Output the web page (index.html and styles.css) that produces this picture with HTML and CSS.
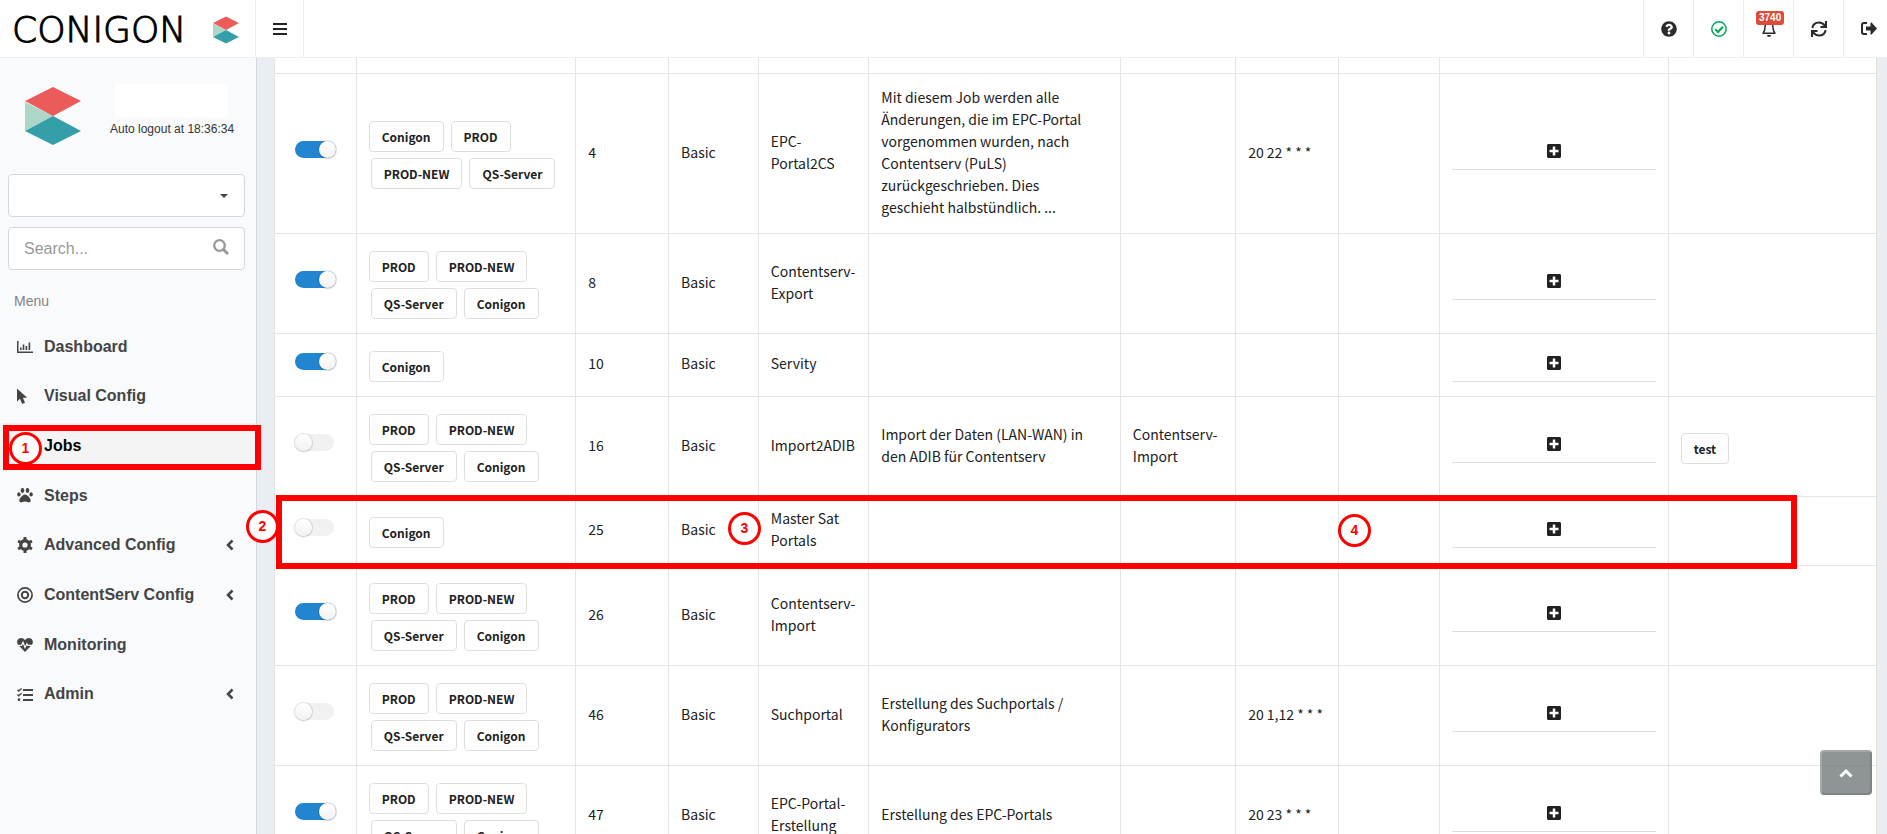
FILE: index.html
```html
<!DOCTYPE html>
<html lang="de">
<head>
<meta charset="utf-8">
<meta name="viewport" content="width=device-width, initial-scale=1">
<title>Conigon – Jobs</title>
<link rel="stylesheet" href="styles.css">
</head>
<body>
<svg class="defs" aria-hidden="true">
  <symbol id="cube" viewBox="0 0 56 58">
    <path fill="#abd6c8" d="M0 15 L28 29 L0 44 Z"/>
    <path fill="#eb5b5a" d="M28 0 L56 14 L28 29 L0 14 Z"/>
    <path fill="#359fa9" d="M28 29 L56 44 L28 58 L0 44 Z"/>
  </symbol>
  <symbol id="plus" viewBox="0 0 448 512">
    <path fill="currentColor" d="M400 32H48C21.500 32 0 53.500 0 80v352c0 26.500 21.500 48 48 48h352c26.500 0 48-21.500 48-48V80c0-26.500-21.500-48-48-48zm-32 252c0 6.600-5.400 12-12 12h-92v92c0 6.600-5.400 12-12 12h-56c-6.600 0-12-5.400-12-12v-92H92c-6.600 0-12-5.400-12-12v-56c0-6.600 5.400-12 12-12h92v-92c0-6.600 5.400-12 12-12h56c6.600 0 12 5.400 12 12v92h92c6.600 0 12 5.400 12 12v56z"/>
  </symbol>
  <symbol id="angle" viewBox="0 0 8 12">
    <path fill="none" stroke="currentColor" stroke-width="2.500" d="M6.500 1.500 L2 6 L6.500 10.500"/>
  </symbol>
</svg>

<header class="topbar">
  <a class="brand" href="#"><span class="brand-name">CONIGON</span><svg class="brand-cube"><use href="#cube"/></svg></a>
  <button class="top-item burger" aria-label="Menu">
    <svg width="14" height="12" viewBox="0 0 14 12"><path fill="#222" d="M0 0h14v2H0zM0 5h14v2H0zM0 10h14v2H0z"/></svg>
  </button>
  <nav class="top-actions">
    <button class="top-item" aria-label="Help">
      <svg width="16" height="16" viewBox="0 0 512 512"><path fill="currentColor" d="M504 256c0 137-111 248-248 248S8 393 8 256C8 119.100 119 8 256 8s248 111.100 248 248zM262.700 90c-54.500 0-89.300 23-116.500 63.800-3.500 5.300-2.400 12.400 2.700 16.300l34.700 26.300c5.200 3.900 12.600 3 16.700-2.100 17.900-22.700 30.100-35.800 57.300-35.800 20.400 0 45.700 13.100 45.700 33 0 15-12.400 22.700-32.500 34C247.100 238.500 216 254.900 216 296v4c0 6.600 5.400 12 12 12h56c6.600 0 12-5.400 12-12v-1.300c0-28.500 83.200-29.700 83.200-106.700 0-58-60.200-102-116.500-102zM256 338c-25.400 0-46 20.600-46 46s20.600 46 46 46 46-20.600 46-46-20.600-46-46-46z"/></svg>
    </button>
    <button class="top-item ok" aria-label="Status">
      <svg width="16" height="16" viewBox="0 0 16 16" fill="none" stroke="currentColor"><circle cx="8" cy="8" r="7.200" stroke-width="1.500"/><path stroke-width="2" d="M4.200 8.300 L7 11 L11.900 5.800"/></svg>
    </button>
    <button class="top-item bell" aria-label="Notifications">
      <svg width="14" height="16" viewBox="0 0 14 16"><path fill="none" stroke="currentColor" stroke-width="1.500" stroke-linejoin="round" d="M7 1.500 C4 1.500 3 4 3 6.500 C3 9.500 2 10.800 1 12.200 H13 C12 10.800 11 9.500 11 6.500 C11 4 10 1.500 7 1.500 Z"/><path fill="currentColor" d="M5 14h4a2 2 0 0 1-4 0z"/></svg>
      <span class="badge">3740</span>
    </button>
    <button class="top-item" aria-label="Refresh">
      <svg width="16" height="16" viewBox="0 0 16 16" fill="none" stroke="currentColor" stroke-width="2"><path d="M1.300 7 C2 3.500 4.800 1.500 8 1.500 C10.500 1.500 12.500 2.700 14 4.800"/><path d="M15 0 V6 H9.500"/><path d="M14.700 9 C14 12.500 11.200 14.500 8 14.500 C5.500 14.500 3.500 13.300 2 11.200"/><path d="M1 16 V10 H6.500"/></svg>
    </button>
    <button class="top-item last" aria-label="Sign out">
      <svg width="16" height="13" viewBox="0 0 16 13"><path fill="none" stroke="currentColor" stroke-width="2" d="M6 1 H3 C1.500 1 1 1.700 1 3 V10 C1 11.300 1.500 12 3 12 H6"/><path fill="currentColor" d="M5 4.500 H9.500 V1 C9.500 .4 10.100 .2 10.600 .6 L16 6.500 L10.600 12.400 C10.100 12.800 9.500 12.600 9.500 12 V8.500 H5 Z"/></svg>
    </button>
  </nav>
</header>

<div class="shell">
  <aside class="sidebar">
    <div class="user">
      <svg class="user-cube"><use href="#cube"/></svg>
      <div class="user-info"><div class="user-name"></div><div>Auto logout at 18:36:34</div></div>
    </div>
    <div class="field">
      <select class="box" aria-label="Client"><option></option></select>
      <svg class="field-icon" width="8" height="4" viewBox="0 0 8 4"><path fill="#444" d="M0 0h8L4 4z"/></svg>
    </div>
    <div class="field">
      <input class="box" type="text" placeholder="Search..." aria-label="Search">
      <svg class="field-icon glass" width="16" height="16" viewBox="0 0 16 16" fill="none" stroke="#999"><circle cx="6.500" cy="6.500" r="5.300" stroke-width="2.300"/><path stroke-width="3" d="M10.500 10.500 L15 15"/></svg>
    </div>
    <h2 class="menu-title">Menu</h2>
    <nav class="menu">
      <a href="#"><svg width="16" height="12" viewBox="0 0 16 12" fill="currentColor"><path d="M0 0h1.500v10.500H16V12H0z"/><path d="M3 6.500h1.600V9H3zM5.700 3.500h1.600V9H5.700zM8.600 5h1.600v4H8.600zM11.600 1.500h1.600V9h-1.600z"/></svg><span>Dashboard</span></a>
      <a href="#"><svg width="16" height="16" viewBox="0 0 16 16" fill="currentColor"><path d="M0 .5 V13.500 L3 10.700 L5.200 16 L8 14.800 L5.900 9.800 H10.200 Z"/></svg><span>Visual Config</span></a>
      <a href="#" class="active"><svg width="16" height="16"></svg><span>Jobs</span></a>
      <a href="#"><svg width="16" height="15" viewBox="0 0 16 15" fill="currentColor"><ellipse cx="1.900" cy="6.400" rx="1.700" ry="2.100"/><ellipse cx="5.500" cy="2.500" rx="1.800" ry="2.400"/><ellipse cx="10.500" cy="2.500" rx="1.800" ry="2.400"/><ellipse cx="14.100" cy="6.400" rx="1.700" ry="2.100"/><path d="M8 6.500 C5.500 6.500 2.300 10.500 2.300 12.600 C2.300 14.300 3.600 14.600 4.800 14.300 C6 14 7 13.600 8 13.600 C9 13.600 10 14 11.200 14.300 C12.400 14.600 13.700 14.300 13.700 12.600 C13.700 10.500 10.500 6.500 8 6.500Z"/></svg><span>Steps</span></a>
      <a href="#"><svg width="16" height="16" viewBox="0 0 16 16"><g fill="currentColor"><path d="M6.500 0h3v16h-3z"/><path d="M6.500 0h3v16h-3z" transform="rotate(60 8 8)"/><path d="M6.500 0h3v16h-3z" transform="rotate(120 8 8)"/></g><circle cx="8" cy="8" r="4.200" fill="none" stroke="currentColor" stroke-width="3.400"/><circle cx="8" cy="8" r="2.600" fill="#f9fafc"/></svg><span>Advanced Config</span><svg class="arrow"><use href="#angle"/></svg></a>
      <a href="#"><svg width="16" height="16" viewBox="0 0 16 16" fill="none" stroke="currentColor"><circle cx="8" cy="8" r="7.100" stroke-width="1.700"/><circle cx="8" cy="8" r="3.200" stroke-width="2"/></svg><span>ContentServ Config</span><svg class="arrow"><use href="#angle"/></svg></a>
      <a href="#"><svg width="16" height="14" viewBox="0 0 16 14"><path fill="currentColor" d="M8 14 L1.200 7 C-.5 5 0 2 1.800 .8 C4 -.6 6.500 .1 8 2.200 C9.500 .1 12 -.6 14.200 .8 C16 2 16.500 5 14.800 7 Z"/><path fill="none" stroke="#f9fafc" stroke-width="1.200" d="M1 7.300 H4.500 L6 4.200 L8 9.500 L9.900 5.800 L10.800 7.300 H15"/></svg><span>Monitoring</span></a>
      <a href="#"><svg width="16" height="13" viewBox="0 0 16 13"><path fill="currentColor" d="M6 1h10v2H6zM6 6h10v2H6zM6 11h10v2H6z"/><circle cx="2" cy="11.700" r="1.400" fill="currentColor"/><path fill="none" stroke="currentColor" stroke-width="1.300" d="M.4 1.800 L1.700 3 L4.600 .4 M.4 6.600 L1.700 7.800 L4.600 5.200"/></svg><span>Admin</span><svg class="arrow"><use href="#angle"/></svg></a>
    </nav>
  </aside>

  <main class="content">
    <table class="jobs">
      <colgroup><col class="c-on"><col class="c-tags"><col class="c-id"><col class="c-type"><col class="c-name"><col class="c-desc"><col class="c-next"><col class="c-cron"><col class="c-last"><col class="c-add"><col class="c-label"></colgroup>
      <tbody>
        <tr class="cut"><td></td><td></td><td></td><td></td><td></td><td></td><td></td><td></td><td></td><td></td><td></td></tr>
        <tr class="tall">
          <td><input class="toggle" type="checkbox" aria-label="Job 4" checked></td>
          <td><div class="tags"><span class="tag">Conigon</span><span class="tag">PROD</span><span class="tag">PROD-NEW</span><span class="tag">QS-Server</span></div></td>
          <td>4</td><td>Basic</td><td>EPC-Portal2CS</td>
          <td class="desc">Mit diesem Job werden alle Änderungen, die im EPC-Portal vorgenommen wurden, nach Contentserv (PuLS) zurückgeschrieben. Dies geschieht halbstündlich. ...</td>
          <td></td><td>20 22 * * *</td><td></td>
          <td><button class="add" aria-label="Add"><svg><use href="#plus"/></svg></button></td><td></td>
        </tr>
        <tr>
          <td><input class="toggle" type="checkbox" aria-label="Job 8" checked></td>
          <td><div class="tags"><span class="tag">PROD</span><span class="tag">PROD-NEW</span><span class="tag">QS-Server</span><span class="tag">Conigon</span></div></td>
          <td>8</td><td>Basic</td><td>Contentserv-Export</td><td></td><td></td><td></td><td></td>
          <td><button class="add" aria-label="Add"><svg><use href="#plus"/></svg></button></td><td></td>
        </tr>
        <tr>
          <td><input class="toggle" type="checkbox" aria-label="Job 10" checked></td>
          <td><div class="tags"><span class="tag">Conigon</span></div></td>
          <td>10</td><td>Basic</td><td>Servity</td><td></td><td></td><td></td><td></td>
          <td><button class="add" aria-label="Add"><svg><use href="#plus"/></svg></button></td><td></td>
        </tr>
        <tr>
          <td><input class="toggle" type="checkbox" aria-label="Job 16"></td>
          <td><div class="tags"><span class="tag">PROD</span><span class="tag">PROD-NEW</span><span class="tag">QS-Server</span><span class="tag">Conigon</span></div></td>
          <td>16</td><td>Basic</td><td>Import2ADIB</td><td class="desc">Import der Daten (LAN-WAN) in den ADIB für Contentserv</td><td>Contentserv-Import</td><td></td><td></td>
          <td><button class="add" aria-label="Add"><svg><use href="#plus"/></svg></button></td><td><div class="tags"><span class="tag">test</span></div></td>
        </tr>
        <tr>
          <td><input class="toggle" type="checkbox" aria-label="Job 25"></td>
          <td><div class="tags"><span class="tag">Conigon</span></div></td>
          <td>25</td><td>Basic</td><td>Master Sat Portals</td><td></td><td></td><td></td><td></td>
          <td><button class="add" aria-label="Add"><svg><use href="#plus"/></svg></button></td><td></td>
        </tr>
        <tr>
          <td><input class="toggle" type="checkbox" aria-label="Job 26" checked></td>
          <td><div class="tags"><span class="tag">PROD</span><span class="tag">PROD-NEW</span><span class="tag">QS-Server</span><span class="tag">Conigon</span></div></td>
          <td>26</td><td>Basic</td><td>Contentserv-Import</td><td></td><td></td><td></td><td></td>
          <td><button class="add" aria-label="Add"><svg><use href="#plus"/></svg></button></td><td></td>
        </tr>
        <tr>
          <td><input class="toggle" type="checkbox" aria-label="Job 46"></td>
          <td><div class="tags"><span class="tag">PROD</span><span class="tag">PROD-NEW</span><span class="tag">QS-Server</span><span class="tag">Conigon</span></div></td>
          <td>46</td><td>Basic</td><td>Suchportal</td><td class="desc">Erstellung des Suchportals / Konfigurators</td><td></td><td>20 1,12 * * *</td><td></td>
          <td><button class="add" aria-label="Add"><svg><use href="#plus"/></svg></button></td><td></td>
        </tr>
        <tr>
          <td><input class="toggle" type="checkbox" aria-label="Job 47" checked></td>
          <td><div class="tags"><span class="tag">PROD</span><span class="tag">PROD-NEW</span><span class="tag">QS-Server</span><span class="tag">Conigon</span></div></td>
          <td>47</td><td>Basic</td><td>EPC-Portal-Erstellung</td><td class="desc">Erstellung des EPC-Portals</td><td></td><td>20 23 * * *</td><td></td>
          <td><button class="add" aria-label="Add"><svg><use href="#plus"/></svg></button></td><td></td>
        </tr>
      </tbody>
    </table>
  </main>
</div>

<button class="to-top" aria-label="Back to top"><svg width="14" height="10" viewBox="0 0 14 10"><path fill="none" stroke="#fff" stroke-width="3" d="M1.500 8.500 L7 3 L12.500 8.500"/></svg></button>

<div class="mark mark-menu"></div>
<div class="mark mark-row"></div>
<span class="step step-1">1</span>
<span class="step step-2">2</span>
<span class="step step-3">3</span>
<span class="step step-4">4</span>
</body>
</html>
```

FILE: styles.css
```css
* { box-sizing: border-box; }

body {
  margin: 0;
  height: 100vh;
  overflow: hidden;
  display: flex;
  flex-direction: column;
  position: relative;
  background: #eaeef3;
  color: #212121;
  font-family: "Liberation Sans", Arial, sans-serif;
}

button { padding: 0; border: 0; background: none; color: inherit; font: inherit; cursor: pointer; }
.defs { position: absolute; width: 0; height: 0; }

/* Top bar */
.topbar {
  flex: none;
  display: flex;
  height: 58px;
  background: #fff;
  border-bottom: 1px solid #eee;
}
.brand {
  width: 255px;
  padding: 3px 16px 0 12px;
  display: flex;
  align-items: center;
  justify-content: space-between;
  color: #000;
  text-decoration: none;
}
.brand-name {
  font: 200 36px/40px "DejaVu Sans Light", "DejaVu Sans", sans-serif;
  -webkit-text-stroke: 1px #000;
}
.brand-cube { width: 26px; height: 30px; }
.top-item {
  width: 50px;
  display: flex;
  align-items: center;
  justify-content: center;
  border-left: 1px solid #eee;
  color: #2b2b2b;
}
.burger { width: 49px; border-right: 1px solid #eee; }
.top-actions { display: flex; margin-left: auto; }
.top-item.ok { color: #00a65a; }
.top-item.last { width: 44px; padding-left: 6px; }
.bell { position: relative; }
.badge {
  position: absolute;
  top: 11px;
  left: 12px;
  padding: 0 3px;
  border-radius: 3px;
  background: #dd4b39;
  color: #fff;
  font-size: 10px;
  line-height: 14px;
  font-weight: bold;
}

.shell { flex: 1; min-height: 0; display: flex; }

/* Sidebar */
.sidebar {
  flex: none;
  width: 257px;
  background: #f9fafc;
  border-right: 1px solid #d2d6de;
}
.user { display: flex; align-items: flex-start; padding: 26px 20px 29px 25px; gap: 29px; }
.user-cube { width: 56px; height: 58px; margin-top: 3px; flex: none; }
.user-info { font-size: 12px; line-height: 16px; white-space: nowrap; color: #333; }
.user-name { height: 33px; margin: 0 6px 4px 5px; background: #fff; }
.field { position: relative; margin: 0 11px 10px 8px; }
.box {
  display: block;
  width: 100%;
  height: 43px;
  padding: 0 15px;
  border: 1px solid #d4d7dd;
  border-radius: 4px;
  background: #fff;
  appearance: none;
  font: 16px/20px "Liberation Sans", Arial, sans-serif;
}
.box::placeholder { color: #999; }
.field-icon { position: absolute; right: 17px; top: 20px; pointer-events: none; }
.field-icon.glass { right: 16px; top: 12px; }
.menu-title { margin: 21px 14px 11px; font-size: 14px; line-height: 20px; font-weight: normal; color: #848484; }
.menu { display: grid; grid-auto-rows: 1fr; height: 397px; }
.menu a {
  display: flex;
  align-items: center;
  gap: 11px;
  margin: 2px 0;
  padding: 0 22px 0 17px;
  color: #444;
  font-size: 16px;
  font-weight: bold;
  text-decoration: none;
}
.menu a.active { background: #f4f4f4; color: #000; }
.menu .arrow { width: 8px; height: 12px; margin-left: auto; }

/* Jobs table */
.content { flex: 1; min-width: 0; overflow: hidden; padding: 0 10px 0 17px; }
.jobs {
  width: 100%;
  table-layout: fixed;
  border-collapse: separate;
  border-spacing: 0;
  background: #fff;
  border-right: 1px solid #dcdee0;
  font: 14px/22px "Noto Sans CJK SC", "Noto Sans", sans-serif;
}
.c-on { width: 5.1%; }
.c-tags { width: 13.7%; }
.c-id { width: 5.8%; }
.c-type { width: 5.6%; }
.c-name { width: 6.9%; }
.c-desc { width: 15.7%; }
.c-next { width: 7.2%; }
.c-cron { width: 6.4%; }
.c-last { width: 6.3%; }
.c-add { width: 14.3%; }
.jobs td {
  padding: 10px 12px 14px;
  vertical-align: middle;
  border-left: 1px solid #e4e5e6;
  border-bottom: 1px solid #e4e5e6;
}
.jobs td.desc { padding-right: 24px; }
.jobs .cut td { height: 16px; padding: 0; }
.jobs .tall { height: 160px; }

.tags { display: flex; flex-wrap: wrap; gap: 6px 3px; padding-top: 7px; }
.tag {
  margin: 0 2px;
  padding: 0 12px;
  border: 1px solid #dedfdf;
  border-radius: 4px;
  font-size: 12px;
  line-height: 29px;
  font-weight: bold;
}
.tag:first-child { margin-left: 0; }

.toggle {
  appearance: none;
  display: block;
  width: 39px;
  height: 17px;
  margin: 0 0 4px 8px;
  border-radius: 9px;
  background: #f1f1f1;
}
.toggle::before {
  content: "";
  display: block;
  width: 17px;
  height: 17px;
  border-radius: 50%;
  background: linear-gradient(#fff, #f2f2f2);
  box-shadow: 0 1px 2px rgba(34, 36, 38, .15), 0 0 0 1px rgba(34, 36, 38, .12);
}
.toggle:checked { background: #2185d0; width: 41px; }
.toggle:checked::before { margin-left: auto; }

.add {
  display: flex;
  align-items: center;
  justify-content: center;
  width: 100%;
  height: 37px;
  border-bottom: 1px solid #dedfe0;
}
.add svg { width: 14px; height: 16px; }

/* Overlays */
.to-top {
  position: absolute;
  right: 15px;
  bottom: 39px;
  width: 52px;
  height: 45px;
  display: flex;
  align-items: center;
  justify-content: center;
  border: 2px solid;
  border-color: #a6a9aa #808384 #808384 #a6a9aa;
  border-radius: 4px;
  background: rgba(108, 115, 118, .76);
}
.mark { position: absolute; border: 6px solid #f00; pointer-events: none; }
.mark-menu { left: 3px; top: 425px; width: 258px; height: 45px; }
.mark-row { left: 276px; right: 90px; top: 495px; height: 74px; }
.step {
  position: absolute;
  width: 33px;
  height: 33px;
  border: 3px solid #f00;
  border-radius: 50%;
  background: #fff;
  color: #f00;
  font-size: 14px;
  line-height: 27px;
  font-weight: bold;
  text-align: center;
}
.step-1 { left: 9px; top: 432px; }
.step-2 { left: 246px; top: 510px; }
.step-3 { left: 728px; top: 512px; }
.step-4 { left: 1338px; top: 514px; }
```
